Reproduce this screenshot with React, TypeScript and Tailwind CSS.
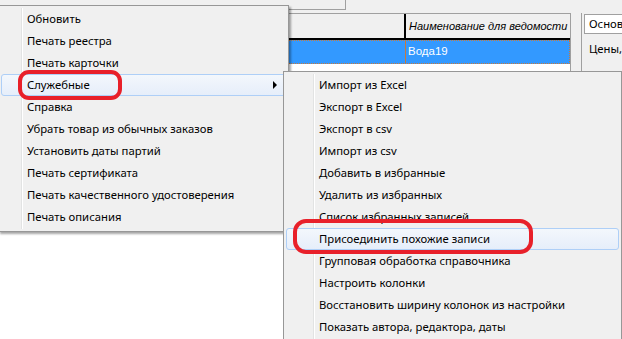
import React from "react";

const MAIN_ITEMS = [
  "Обновить",
  "Печать реестра",
  "Печать карточки",
  "Служебные",
  "Справка",
  "Убрать товар из обычных заказов",
  "Установить даты партий",
  "Печать сертификата",
  "Печать качественного удостоверения",
  "Печать описания",
];

const SUB_ITEMS = [
  "Импорт из Excel",
  "Экспорт в Excel",
  "Экспорт в csv",
  "Импорт из csv",
  "Добавить в избранные",
  "Удалить из избранных",
  "Список избранных записей",
  "Присоединить похожие записи",
  "Групповая обработка справочника",
  "Настроить колонки",
  "Восстановить ширину колонок из настройки",
  "Показать автора, редактора, даты",
];

function MenuItem({
  label,
  active,
  gutter,
  arrow,
}: {
  label: string;
  active?: boolean;
  gutter: number;
  arrow?: boolean;
}) {
  return (
    <div
      className={`relative mx-[2px] flex h-[22px] items-center rounded-[3px] border ${
        active
          ? "border-[#aecff7] bg-gradient-to-b from-[#f3f7fc] to-[#e6eefa]"
          : "border-transparent"
      }`}
    >
      <span style={{ paddingLeft: gutter }} className="whitespace-nowrap">
        {label}
      </span>
      {arrow && (
        <span className="ml-auto mr-[8px] h-0 w-0 border-y-[4px] border-l-[4px] border-y-transparent border-l-black" />
      )}
    </div>
  );
}

export default function App() {
  return (
    <div
      className="relative h-[339px] w-[622px] overflow-hidden bg-[#f0f0f0] text-[11.3px] text-black"
      style={{ fontFamily: '"Noto Sans", "Open Sans", sans-serif' }}
    >
      {/* window background ------------------------------------------- */}
      <div className="flex h-[13px]">
        <div className="h-[10px] w-[346px] border-b border-r border-[#a0a0a0] bg-[#f0f0f0]" />
        <div className="flex-1" />
      </div>

      <div className="flex h-[326px]">
        {/* grid */}
        <div className="flex w-[571px] shrink-0 flex-col border-r border-t border-[#a0a0a0] bg-white">
          <div className="flex h-[26px] border-b-2 border-black bg-[#f0f0f0]">
            <div className="w-[406px] border-r-2 border-black" />
            <div
              className="flex flex-1 items-center pl-[3px] text-[11px] italic whitespace-nowrap"
              style={{ fontFamily: '"Liberation Sans", sans-serif' }}
            >
              Наименование для ведомости
            </div>
          </div>
          <div className="flex h-[24px] border border-dotted border-[#c87a3c] bg-[#3399ff] text-white">
            <div className="w-[405px] border-r border-[#c87a3c]" />
            <div
              className="flex items-center pl-[2px] text-[11.5px]"
              style={{ fontFamily: '"Liberation Sans", sans-serif' }}
            >
              Вода19
            </div>
          </div>
          <div className="flex-1 bg-white" />
        </div>

        {/* right panel */}
        <div className="ml-[10px] flex min-w-0 flex-1 flex-col border-l border-[#a0a0a0] pl-[2px] pt-[1px]">
          <div className="flex h-[20px] items-center border border-r-0 border-[#a0a0a0] bg-white pl-[4px] whitespace-nowrap">
            Основ
          </div>
          <div className="mt-[7px] pl-[5px] whitespace-nowrap">Цены,</div>
        </div>
      </div>

      {/* main context menu ------------------------------------------- */}
      <div className="absolute left-[-2px] top-[5px] h-[227px] w-[291px] border border-[#979797] bg-[#f0f0f0] py-[2px] shadow-[2px_2px_2px_rgba(0,0,0,0.35)]">
        <div className="absolute bottom-[2px] left-[22px] top-[2px] w-px bg-[#e2e3e3]" />
        <div className="absolute bottom-[2px] left-[23px] top-[2px] w-px bg-white" />
        {MAIN_ITEMS.map((t) => (
          <MenuItem
            key={t}
            label={t}
            gutter={25}
            active={t === "Служебные"}
            arrow={t === "Служебные"}
          />
        ))}
      </div>

      {/* submenu ----------------------------------------------------- */}
      <div className="absolute left-[283px] top-[71px] h-[280px] w-[339px] border border-[#979797] bg-[#f0f0f0] py-[2px]">
        <div className="absolute bottom-0 left-[29px] top-[2px] w-px bg-[#e2e3e3]" />
        <div className="absolute bottom-0 left-[30px] top-[2px] w-px bg-white" />
        {SUB_ITEMS.map((t) => (
          <MenuItem
            key={t}
            label={t}
            gutter={32}
            active={t === "Присоединить похожие записи"}
          />
        ))}
      </div>

      {/* red annotation marks --------------------------------------- */}
      <div className="absolute left-[18px] top-[70px] h-[30px] w-[104px] rounded-[11px] border-[4px] border-[#e8202a]" />
      <div className="absolute left-[293px] top-[219px] h-[35px] w-[240px] rounded-[13px] border-[4px] border-[#e8202a]" />
    </div>
  );
}
